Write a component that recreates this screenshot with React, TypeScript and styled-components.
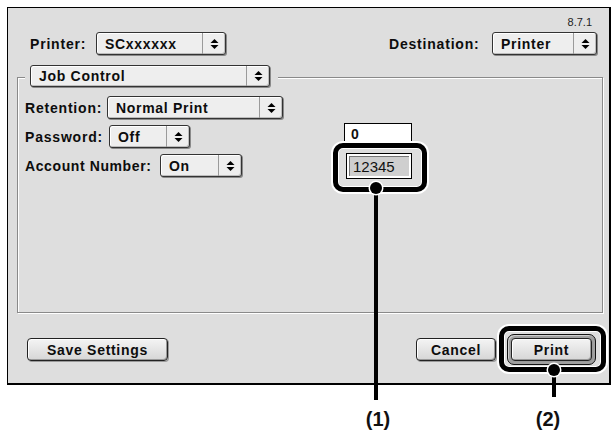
import React from 'react';
import styled, { createGlobalStyle } from 'styled-components';

const GlobalStyle = createGlobalStyle`
  html, body {
    margin: 0;
    padding: 0;
    background: #ffffff;
  }
  body {
    font-family: "Liberation Sans", Arial, sans-serif;
    color: #111;
  }
`;

// Page + dialog frame
const Page = styled.div`
  position: relative;
  width: 611px;
  height: 437px;
  padding: 7px 0 0 7px;
  box-sizing: border-box;
  overflow: hidden;
`;

const Dialog = styled.div`
  width: 604px;
  height: 378px;
  box-sizing: border-box;
  background: #dedede;
  border: 1px solid #000;
  border-right-width: 2px;
  border-bottom-width: 2px;
  padding: 0 12px 0 9px;
  display: flex;
  flex-direction: column;
`;

const Version = styled.div`
  margin-top: 8px;
  height: 12px;
  line-height: 12px;
  font-size: 11px;
  text-align: right;
  padding-right: 5px;
  color: #222;
`;

const HeaderRow = styled.div`
  margin-top: 4px;
  height: 23px;
  display: flex;
  justify-content: space-between;
  padding-left: 13px;
`;

const Field = styled.div`
  display: flex;
  align-items: center;
`;

const Label = styled.span<{ $w: number; $ls?: number }>`
  width: ${({ $w }) => $w}px;
  flex-shrink: 0;
  font-size: 14px;
  font-weight: bold;
  letter-spacing: ${({ $ls }) => $ls ?? 0.8}px;
  white-space: nowrap;
  color: #0d0d0d;
`;

// Popup menu (Platinum style)
const Popup = styled.div<{ $w: number; $h?: number }>`
  width: ${({ $w }) => $w}px;
  height: ${({ $h }) => $h ?? 23}px;
  box-sizing: border-box;
  display: flex;
  border: 1px solid #333;
  border-radius: 3px;
  background: #eeeeee;
  box-shadow: 1px 1px 0 #8a8a8a, inset 1px 1px 0 #fff, inset -1px -1px 0 #bdbdbd;
`;

const PopupText = styled.span`
  flex: 1;
  padding-left: 8px;
  display: flex;
  align-items: center;
  font-size: 14px;
  font-weight: bold;
  letter-spacing: 0.7px;
  white-space: nowrap;
  overflow: hidden;
  color: #0d0d0d;
`;

const PopupArrow = styled.span`
  width: 22px;
  border-left: 1px solid #9a9a9a;
  display: flex;
  align-items: center;
  justify-content: center;
`;

// Group box
const GroupBox = styled.div`
  margin-top: 22px;
  width: 586px;
  height: 236px;
  box-sizing: border-box;
  border: 1px solid #8a8a8a;
  box-shadow: 1px 1px 0 #fff, inset 1px 1px 0 #fff;
  padding-left: 7px;
  display: flex;
  flex-direction: column;
`;

const Legend = styled.div`
  align-self: flex-start;
  margin-top: -13px;
  padding: 0 8px 0 5px;
  background: #dedede;
`;

const Rows = styled.div`
  margin-top: 9px;
  display: flex;
  flex-direction: column;
  gap: 6px;
`;

const Row = styled.div`
  display: flex;
  height: 23px;
`;

const LeftCell = styled.div`
  width: 319px;
  display: flex;
  align-items: center;
`;

const TextBox = styled.div<{ $w: number; $h: number; $dy: number; $dx?: number }>`
  width: ${({ $w }) => $w}px;
  height: ${({ $h }) => $h}px;
  margin-top: ${({ $dy }) => $dy}px;
  margin-left: ${({ $dx }) => $dx ?? 0}px;
  box-sizing: border-box;
  border: 1px solid #000;
  background: #fff;
  font-size: 14px;
  font-weight: bold;
  padding: 2px 0 0 6px;
`;

const ActiveBox = styled.div<{ $w: number; $h: number; $dy: number; $dx?: number }>`
  width: ${({ $w }) => $w}px;
  height: ${({ $h }) => $h}px;
  margin-top: ${({ $dy }) => $dy}px;
  margin-left: ${({ $dx }) => $dx ?? 0}px;
  box-sizing: border-box;
  border: 1px solid #000;
  background: #fff;
  padding: 2px;
  display: flex;
`;

const ActiveInner = styled.div`
  flex: 1;
  background: #cfcfcf;
  border-top: 1px solid #777;
  border-left: 1px solid #777;
  font-size: 15px;
  line-height: 19px;
  padding-left: 3px;
  color: #111;
`;

// Bottom buttons
const ButtonRow = styled.div`
  margin-top: 21px;
  height: 31px;
  display: flex;
  align-items: center;
  padding-left: 10px;
  padding-right: 1px;
`;

const Spacer = styled.div`
  flex: 1;
`;

const Button = styled.div<{ $w?: number }>`
  width: ${({ $w }) => ($w ? `${$w}px` : 'auto')};
  flex: ${({ $w }) => ($w ? '0 0 auto' : '1')};
  height: 23px;
  box-sizing: border-box;
  border: 1px solid #222;
  border-radius: 4px;
  background: linear-gradient(#f4f4f4, #d6d6d6);
  box-shadow: inset 1px 1px 0 #fff, inset -1px -1px 0 #999, 1px 1px 0 #9a9a9a;
  display: flex;
  align-items: center;
  justify-content: center;
  font-size: 14px;
  font-weight: bold;
  letter-spacing: 0.7px;
  color: #0d0d0d;
`;

const DefaultRing = styled.div`
  margin-left: 11px;
  width: 89px;
  height: 31px;
  box-sizing: border-box;
  border: 1px solid #111;
  border-radius: 7px;
  background: #a0a0a0;
  box-shadow: inset 1px 1px 0 #cfcfcf;
  padding: 3px;
  display: flex;
`;

// Annotation overlay
const Callout = styled.div<{ $x: number; $y: number; $w: number; $h: number }>`
  position: absolute;
  left: ${({ $x }) => $x}px;
  top: ${({ $y }) => $y}px;
  width: ${({ $w }) => $w}px;
  height: ${({ $h }) => $h}px;
  box-sizing: border-box;
  border: 5px solid #000;
  border-radius: 10px;
  box-shadow: 0 0 0 2px #fff, inset 0 0 0 1px #fff;
`;

const Leader = styled.div<{ $x: number; $y: number; $h: number }>`
  position: absolute;
  left: ${({ $x }) => $x - 2}px;
  top: ${({ $y }) => $y}px;
  width: 4px;
  height: ${({ $h }) => $h}px;
  background: #000;
`;

const Dot = styled.div<{ $x: number; $y: number }>`
  position: absolute;
  left: ${({ $x }) => $x - 6}px;
  top: ${({ $y }) => $y - 6}px;
  width: 12px;
  height: 12px;
  border-radius: 50%;
  background: #000;
  box-shadow: 0 0 0 1.5px #fff;
`;

const Tag = styled.div<{ $x: number }>`
  position: absolute;
  left: ${({ $x }) => $x - 20}px;
  top: 408px;
  width: 40px;
  text-align: center;
  font-size: 20px;
  font-weight: bold;
  color: #111;
`;

const Arrows = () => (
  <svg width="9" height="12" viewBox="0 0 9 12">
    <polygon points="0.5,5 4.5,1 8.5,5" fill="#000" />
    <polygon points="0.5,7 4.5,11 8.5,7" fill="#000" />
  </svg>
);

const Select = ({ value, w, h }: { value: string; w: number; h?: number }) => (
  <Popup $w={w} $h={h}>
    <PopupText>{value}</PopupText>
    <PopupArrow>
      <Arrows />
    </PopupArrow>
  </Popup>
);

export default function App() {
  return (
    <>
      <GlobalStyle />
      <Page>
        <Dialog>
          <Version>8.7.1</Version>
          <HeaderRow>
            <Field>
              <Label $w={66}>Printer:</Label>
              <Select value="SCxxxxxx" w={130} />
            </Field>
            <Field>
              <Label $w={103}>Destination:</Label>
              <Select value="Printer" w={105} />
            </Field>
          </HeaderRow>

          <GroupBox>
            <Legend>
              <Select value="Job Control" w={240} h={22} />
            </Legend>
            <Rows>
              <Row>
                <LeftCell>
                  <Label $w={82}>Retention:</Label>
                  <Select value="Normal Print" w={176} />
                </LeftCell>
              </Row>
              <Row>
                <LeftCell>
                  <Label $w={84}>Password:</Label>
                  <Select value="Off" w={81} />
                </LeftCell>
                <TextBox $w={68} $h={19} $dy={-2}>0</TextBox>
              </Row>
              <Row>
                <LeftCell>
                  <Label $w={135} $ls={0.6}>Account Number:</Label>
                  <Select value="On" w={82} />
                </LeftCell>
                <ActiveBox $w={66} $h={26} $dy={-1} $dx={2}>
                  <ActiveInner>12345</ActiveInner>
                </ActiveBox>
              </Row>
            </Rows>
          </GroupBox>

          <ButtonRow>
            <Button $w={141}>Save Settings</Button>
            <Spacer />
            <Button $w={80}>Cancel</Button>
            <DefaultRing>
              <Button>Print</Button>
            </DefaultRing>
          </ButtonRow>
        </Dialog>

        <Callout $x={333} $y={143} $w={94} $h={49} />
        <Leader $x={376} $y={188} $h={212} />
        <Dot $x={376} $y={188} />
        <Tag $x={378}>(1)</Tag>

        <Callout $x={499} $y={326} $w={107} $h={46} />
        <Leader $x={554} $y={370} $h={27} />
        <Dot $x={554} $y={370} />
        <Tag $x={548}>(2)</Tag>
      </Page>
    </>
  );
}
